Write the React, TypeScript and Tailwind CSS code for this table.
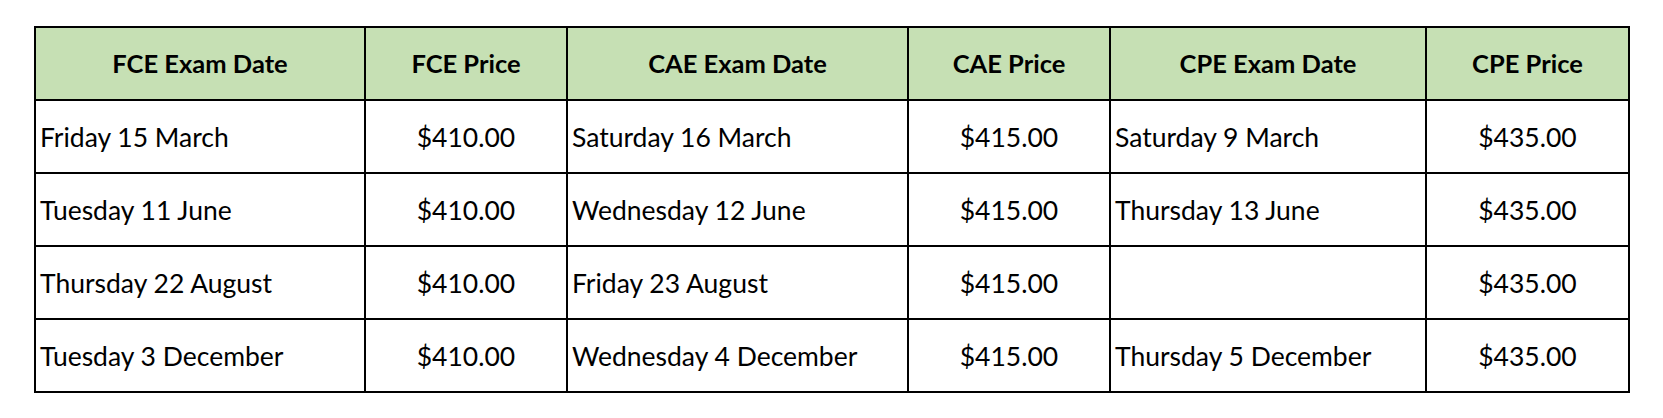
const headers = [
  "FCE Exam Date",
  "FCE Price",
  "CAE Exam Date",
  "CAE Price",
  "CPE Exam Date",
  "CPE Price",
];

const rows: string[][] = [
  ["Friday 15 March", "$410.00", "Saturday 16 March", "$415.00", "Saturday 9 March", "$435.00"],
  ["Tuesday 11 June", "$410.00", "Wednesday 12 June", "$415.00", "Thursday 13 June", "$435.00"],
  ["Thursday 22 August", "$410.00", "Friday 23 August", "$415.00", "", "$435.00"],
  ["Tuesday 3 December", "$410.00", "Wednesday 4 December", "$415.00", "Thursday 5 December", "$435.00"],
];

export default function App() {
  return (
    <div className="w-[1663px] h-[418px] bg-white pt-[26px] pl-[34px] font-['Lato','Liberation_Sans',sans-serif] text-black">
      <table className="table-fixed border-collapse w-[1594px]">
        <colgroup>
          <col className="w-[330px]" />
          <col className="w-[202px]" />
          <col className="w-[341px]" />
          <col className="w-[202px]" />
          <col className="w-[316px]" />
          <col className="w-[203px]" />
        </colgroup>
        <thead>
          <tr className="h-[73px] bg-[#c6e0b4]">
            {headers.map((h) => (
              <th
                key={h}
                className="border-2 border-black text-center align-middle font-bold text-[25.5px]"
              >
                {h}
              </th>
            ))}
          </tr>
        </thead>
        <tbody>
          {rows.map((row, i) => (
            <tr key={i} className="h-[73px]">
              {row.map((cell, j) => (
                <td
                  key={j}
                  className={`border-2 border-black align-middle text-[26.5px] pt-[2px] ${
                    j % 2 === 1 ? "text-center" : "text-left pl-[4px]"
                  }`}
                >
                  {cell}
                </td>
              ))}
            </tr>
          ))}
        </tbody>
      </table>
    </div>
  );
}
